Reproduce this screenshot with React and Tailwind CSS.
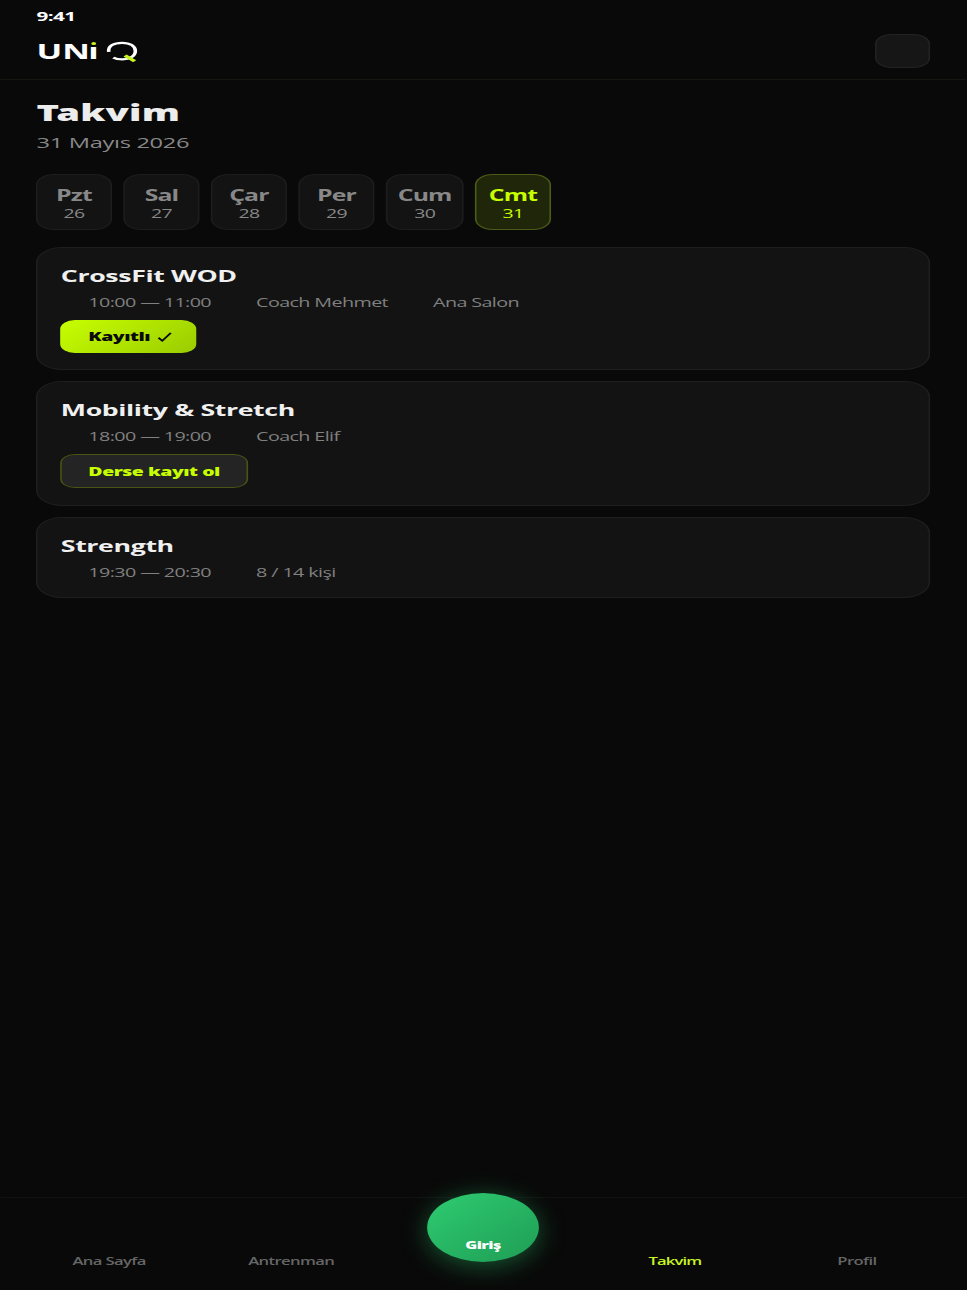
const DAYS = [
  { name: 'Pzt', date: 26, width: 'w-[47px]' },
  { name: 'Sal', date: 27, width: 'w-[47px]' },
  { name: 'Çar', date: 28, width: 'w-[47px]' },
  { name: 'Per', date: 29, width: 'w-[47px]' },
  { name: 'Cum', date: 30, width: 'w-[48px]' },
  { name: 'Cmt', date: 31, width: 'w-[47px]', active: true },
];

const TABS_LEFT = ['Ana Sayfa', 'Antrenman'];

function Logo() {
  return (
    <div className="flex h-6 items-center" aria-label="UNi Q">
      <span className="flex w-[43px] pl-[0.4px] text-[21px] font-bold leading-6 text-white">
        <span>U</span>
        <span>N</span>
        <span className="relative -ml-px">
          ı
          <span className="absolute left-1/2 top-[3px] h-[3px] w-[3.6px] -translate-x-1/2 rounded-full bg-[#c8f520]" />
        </span>
      </span>
      <svg className="h-[22px] w-[20px]" viewBox="0 0 20 22" fill="none">
        <path
          d="M2 11.8C1.4 5.8 5.2 2.8 10.2 2.8C15.2 2.8 18.4 6.2 18.4 11C18.4 16 14.8 19.4 10.4 19.4C8 19.4 6.2 18.8 4.8 17.6"
          stroke="#fff"
          strokeWidth="2.2"
        />
        <path d="M12 15.6L18 21.2" stroke="#c8f520" strokeWidth="2.8" />
      </svg>
    </div>
  );
}

function DayChip({ day }) {
  return (
    <div
      className={`flex h-14 shrink-0 flex-col items-center rounded-[11px] border pt-[9px] ${day.width} ${
        day.active
          ? 'border-[#4b5a16] bg-[#20260a] text-[#c8ff00]'
          : 'border-[#1d1d1d] bg-[#131313] text-[#888]'
      }`}
    >
      <span className="text-[15.3px] font-bold leading-[22px] tracking-[-0.55px]">{day.name}</span>
      <span className="text-xs leading-4 tracking-[-0.4px]">{day.date}</span>
    </div>
  );
}

function ClassCard({ title, meta, className, children }) {
  return (
    <section className={`rounded-2xl border border-[#1e1e1e] bg-[#131313] px-[14px] pt-4 ${className}`}>
      <h2 className="pl-[0.4px] text-[16.5px] font-bold leading-6 tracking-[-0.24px] text-[#f0f0f0]">{title}</h2>
      <div className="mt-[6px] flex gap-[27.8px] pl-[17.4px] text-[12.2px] leading-[18px] tracking-[-0.38px] text-[#808080]">
        {meta.map((item) => (
          <span key={item}>{item}</span>
        ))}
      </div>
      {children}
    </section>
  );
}

function Tab({ label, active }) {
  return (
    <span
      className={`w-[112.4px] text-center text-[10.3px] font-semibold leading-4 ${
        active ? 'tracking-[-0.55px] text-[#c8f520]' : 'tracking-[-0.4px] text-[#666]'
      }`}
    >
      {label}
    </span>
  );
}

export default function App() {
  return (
    <div className="flex h-[1290px] w-[967px] justify-center overflow-hidden bg-[#090909] pr-px">
      {/* wide layout: everything is stretched sideways by the same factor */}
      <div className="flex h-full w-[596px] shrink-0 scale-x-[1.62] flex-col font-['Open_Sans','Noto_Sans',sans-serif]">
        <header className="h-20 border-b border-[#15160f] px-[22px]">
          <div className="pl-[0.4px] pt-[7px] text-[12.8px] font-bold leading-[18px] tracking-[-0.4px] text-white">9:41</div>
          <div className="flex items-start justify-between pt-[9px]">
            <div className="pt-[5px]">
              <Logo />
            </div>
            <button type="button" aria-label="Menü" className="h-[34px] w-[34px] rounded-[10px] border border-[#222] bg-[#161616]" />
          </div>
        </header>

        <main className="flex-1 px-[22px]">
          <h1 className="pl-[0.4px] pt-[16px] font-['Noto_Sans','Open_Sans',sans-serif] text-[23.6px] font-black leading-[33px] tracking-[0.1px] text-[#ececec]">
            Takvim
          </h1>
          <p className="pl-[0.4px] text-[14.6px] leading-[26px] tracking-[-0.2px] text-[#888]">31 Mayıs 2026</p>

          <div className="mt-[19px] flex gap-[7px]">
            {DAYS.map((day) => (
              <DayChip key={day.date} day={day} />
            ))}
          </div>

          <div className="mt-[17px] flex flex-col gap-[11px]">
            <ClassCard title="CrossFit WOD" meta={['10:00 — 11:00', 'Coach Mehmet', 'Ana Salon']} className="h-[123px]">
              <button
                type="button"
                className="mt-[8px] flex h-[33px] w-[84px] items-center rounded-[9px] bg-linear-135 from-[#c8ff00] to-[#9acc00] pl-[17.4px] font-['Noto_Sans','Open_Sans',sans-serif] text-xs font-black tracking-[-0.3px] text-[#0a0a0a]"
              >
                Kayıtlı
                <svg className="ml-1 h-[10px] w-[9px]" viewBox="0 0 9 10" fill="none">
                  <path d="M0.7 5.8L3 8.8L8.3 0.8" stroke="#0a0a0a" strokeWidth="1.4" />
                </svg>
              </button>
            </ClassCard>
            <ClassCard title="Mobility & Stretch" meta={['18:00 — 19:00', 'Coach Elif']} className="h-[125px]">
              <button
                type="button"
                className="mt-[8px] flex h-[34px] w-[116px] items-center rounded-[9px] border border-[#465414] bg-[#242424] pl-[16.4px] pt-[2px] font-['Noto_Sans','Open_Sans',sans-serif] text-xs font-black tracking-[-0.3px] text-[#c8ff00]"
              >
                Derse kayıt ol
              </button>
            </ClassCard>
            <ClassCard title="Strength" meta={['19:30 — 20:30', '8 / 14 kişi']} className="h-[81px]" />
          </div>
        </main>

        <nav className="relative flex h-[93px] items-start border-t border-[#121212] px-[11px] pt-[55px]">
          {TABS_LEFT.map((label) => (
            <Tab key={label} label={label} />
          ))}
          <span className="flex-1" />
          <Tab label="Takvim" active />
          <Tab label="Profil" />
          <button
            type="button"
            className="absolute left-1/2 top-[-5px] flex h-[69px] w-[69px] -translate-x-1/2 items-end justify-center rounded-full bg-linear-135 from-[#2ecc71] to-[#1f9d55] pb-[10px] font-['Noto_Sans','Open_Sans',sans-serif] text-[10px] font-black leading-[14px] tracking-[-0.4px] text-white shadow-[0_4px_20px_rgba(46,204,113,0.4)]"
          >
            Giriş
          </button>
        </nav>
      </div>
    </div>
  );
}
